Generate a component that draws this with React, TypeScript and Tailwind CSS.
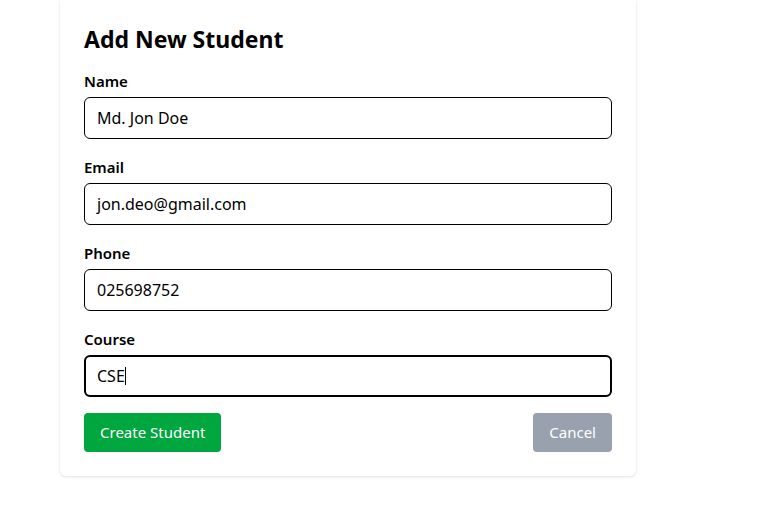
import React, { useState } from 'react';

const Field = ({
  label,
  value,
  focused,
}: {
  label: string;
  value: string;
  focused?: boolean;
}) => (
  <div className={focused ? '' : 'mb-[18px]'}>
    <label className="block text-[15px] leading-5 font-semibold text-black mb-1.5">{label}</label>
    <div
      className={
        focused
          ? 'h-[42px] rounded-md border-2 border-black px-[11px] flex items-center'
          : 'h-[42px] rounded-md border border-black px-3 flex items-center'
      }
    >
      <span className="text-base text-black">{value}</span>
      {focused && <span className="w-px h-[18px] bg-black" />}
    </div>
  </div>
);

const App = () => {
  const [form] = useState({
    name: 'Md. Jon Doe',
    email: 'jon.deo@gmail.com',
    phone: '025698752',
    course: 'CSE',
  });

  return (
    <div className="min-h-screen bg-white font-['Noto_Sans',sans-serif]">
      <div className="ml-[60px] w-[576px] bg-white rounded-b-md shadow-[0_1px_3px_rgba(0,0,0,0.12)] px-6 pt-[23px] pb-6">
        <h1 className="text-[23px] leading-8 font-bold text-black mb-4">Add New Student</h1>
        <Field label="Name" value={form.name} />
        <Field label="Email" value={form.email} />
        <Field label="Phone" value={form.phone} />
        <Field label="Course" value={form.course} focused />
        <div className="flex justify-between mt-4">
          <button className="h-[39px] px-4 rounded bg-green-600 text-white text-[15px]">Create Student</button>
          <button className="h-[39px] px-4 rounded bg-gray-400 text-white text-[15px]">Cancel</button>
        </div>
      </div>
    </div>
  );
};

export default App;
